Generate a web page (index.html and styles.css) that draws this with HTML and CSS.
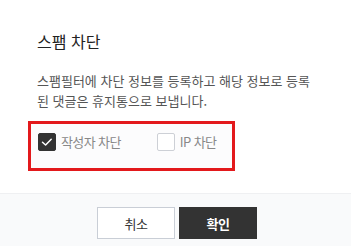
FILE: index.html
```html
<!DOCTYPE html>
<html lang="ko">
<head>
<meta charset="utf-8">
<link rel="stylesheet" href="styles.css">
</head>
<body>
<div class="dialog">
  <div class="content">
    <h1 class="title">스팸 차단</h1>
    <p class="desc">스팸필터에 차단 정보를 등록하고 해당 정보로 등록된 댓글은 휴지통으로 보냅니다.</p>
    <div class="options">
      <label class="opt">
        <span class="box checked">
          <svg width="18" height="18" viewBox="0 0 18 18"><polyline points="4.5,9.2 7.6,12 13.2,6.3" fill="none" stroke="#fff" stroke-width="1.5" stroke-linecap="round" stroke-linejoin="round"/></svg>
        </span>
        <span class="opt-text">작성자 차단</span>
      </label>
      <label class="opt">
        <span class="box"></span>
        <span class="opt-text">IP 차단</span>
      </label>
    </div>
  </div>
  <div class="footer">
    <button class="btn btn-cancel">취소</button>
    <button class="btn btn-ok">확인</button>
  </div>
</div>
</body>
</html>
```
FILE: styles.css
```css
html, body {
  margin: 0;
  padding: 0;
  background: #fff;
}
body {
  font-family: "Noto Sans CJK KR", "Noto Sans", sans-serif;
  color: #222;
  width: 351px;
  height: 246px;
  overflow: hidden;
}
.dialog {
  display: flex;
  flex-direction: column;
  height: 246px;
}
.content {
  padding: 29px 37px 0 37px;
  flex: 1;
}
.title {
  margin: 0;
  font-size: 16px;
  line-height: 24px;
  font-weight: 400;
  letter-spacing: 0;
  color: #222;
}
.desc {
  margin: 18px 0 0 0;
  width: 277px;
  font-size: 13px;
  line-height: 20px;
  letter-spacing: 0;
  word-break: break-all;
  color: #555;
}
.options {
  display: flex;
  width: max-content;
  align-items: center;
  gap: 36px;
  margin: 10px 0 0 -9px;
  padding: 9px 16px 17px 7px;
  border: 3px solid #e3191c;
  background: #fcfcfd;
}
.opt {
  display: flex;
  align-items: center;
  gap: 5px;
}
.box {
  width: 18px;
  height: 18px;
  box-sizing: border-box;
  border: 1px solid #cdd0d6;
  border-radius: 2px;
  background: #fff;
  display: block;
}
.box.checked {
  background: #333;
  border-color: #333;
}
.box svg {
  display: block;
  margin: -1px;
}
.opt-text {
  font-size: 13px;
  line-height: 18px;
  letter-spacing: -0.6px;
  color: #888;
}
.footer {
  border-top: 1px solid #eff0f2;
  background: #f9fafb;
  height: 53px;
  display: flex;
  justify-content: center;
  align-items: flex-start;
  gap: 4px;
  padding-top: 13px;
  box-sizing: border-box;
  padding-left: 3px;
}
.btn {
  width: 78px;
  height: 32px;
  box-sizing: border-box;
  font-family: "Noto Sans CJK KR", "Noto Sans", sans-serif;
  font-size: 13px;
  letter-spacing: -0.5px;
  border-radius: 0;
  padding: 0;
  margin: 0;
}
.btn-cancel {
  background: #fff;
  border: 1px solid #c9ced6;
  color: #333;
}
.btn-ok {
  background: #333;
  border: 1px solid #333;
  color: #fff;
  font-weight: 700;
}
```
